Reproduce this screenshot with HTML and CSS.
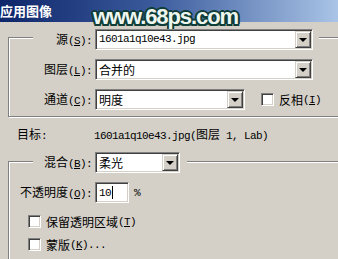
FILE: index.html
```html
<!DOCTYPE html>
<html lang="zh-CN">
<head>
  <meta charset="UTF-8" />
  <title>应用图像</title>
  <link rel="stylesheet" href="styles.css">
</head>
<body>

  <!-- Title bar -->
  <div class="titlebar">
    <span class="title">应用图像</span>
    <span class="watermark">www.68ps.com</span>
  </div>

  <!-- Source group -->
  <fieldset class="group group-source">
    <legend class="row">
      <span class="lbl lbl-legend">源<span class="lt">(<u>S</u>):</span></span>
      <div class="select select-wide"><span class="val lt">1601a1q10e43.jpg</span><span class="btn"></span></div>
    </legend>

    <div class="row">
      <span class="lbl">图层<span class="lt">(<u>L</u>):</span></span>
      <div class="select select-wide"><span class="val">合并的</span><span class="btn"></span></div>
    </div>

    <div class="row">
      <span class="lbl">通道<span class="lt">(<u>C</u>):</span></span>
      <div class="select select-mid"><span class="val">明度</span><span class="btn"></span></div>
      <span class="check check-invert"><span class="box"></span>反相<span class="lt">(<u>I</u>)</span></span>
    </div>
  </fieldset>

  <!-- Target -->
  <div class="target">
    <span class="target-lbl">目标<span class="lt">:</span></span>
    <span class="target-val"><span class="lt">1601a1q10e43.jpg(</span>图层<span class="lt"> 1, Lab)</span></span>
  </div>

  <!-- Blending group -->
  <fieldset class="group group-blend">
    <legend class="row">
      <span class="lbl lbl-legend">混合<span class="lt">(<u>B</u>):</span></span>
      <div class="select select-small"><span class="val">柔光</span><span class="btn"></span></div>
    </legend>

    <div class="row row-opacity">
      <span class="lbl">不透明度<span class="lt">(<u>O</u>):</span></span>
      <div class="input"><span class="lt">10</span><span class="caret"></span></div>
      <span class="lt pct">%</span>
    </div>

    <div class="check check-row"><span class="box"></span>保留透明区域<span class="lt">(<u>T</u>)</span></div>
    <div class="check check-row"><span class="box"></span>蒙版<span class="lt">(<u>K</u>)...</span></div>
  </fieldset>

</body>
</html>
```

FILE: styles.css
```css
html {
  overflow: hidden;
}
body {
  margin: 0;
  background: #d4d0c8;
  font-family: "Noto Sans CJK SC", sans-serif;
  font-size: 12px;
  color: #000;
  overflow: hidden;
  width: 338px;
  height: 259px;
}
.lt {
  font-family: "Liberation Mono", monospace;
  font-size: 11px;
  letter-spacing: -0.6px;
}
u {
  text-decoration: underline;
}

/* title bar */
.titlebar {
  position: relative;
  height: 22px;
  background: linear-gradient(to right, #0e266a, #3a5a9c 45%, #a9c4e6);
}
.title {
  display: block;
  color: #fff;
  font-weight: bold;
  font-size: 13px;
  line-height: 22px;
}
.watermark {
  position: absolute;
  left: 93px;
  top: 4px;
  font-family: "Liberation Sans", Arial, sans-serif;
  font-weight: bold;
  font-size: 22px;
  letter-spacing: -1.1px;
  line-height: 25px;
  color: #eef6ef;
  text-shadow:
    2px 0 0 #0f3d38, -2px 0 0 #0f3d38, 0 2px 0 #0f3d38, 0 -2px 0 #0f3d38,
    1.5px 1.5px 0 #0f3d38, -1.5px 1.5px 0 #0f3d38, 1.5px -1.5px 0 #0f3d38, -1.5px -1.5px 0 #0f3d38;
}

/* group boxes */
.group {
  margin: 2px -20px 0 8px;
  padding: 0 0 6px 0;
  border: 1px solid #808080;
  box-shadow: inset 1px 1px 0 #fff, 1px 1px 0 #fff;
  min-width: 0;
}
.group legend {
  margin-left: 24px;
  padding: 5px 6px 0 0;
  background: #d4d0c8;
}
.group-blend {
  margin-top: 9px;
  padding-bottom: 40px;
}
.group-blend legend {
  padding: 3px 7px 0 0;
}

.row {
  display: flex;
  align-items: center;
  height: 21px;
  margin-top: 9px;
}
.group legend.row {
  margin-top: 0;
}
.lbl {
  width: 83px;
  margin-right: 3px;
  text-align: right;
  white-space: nowrap;
  line-height: 21px;
}
.lbl-legend {
  width: 59px;
}

/* sunken select */
.select, .input {
  position: relative;
  box-sizing: border-box;
  height: 21px;
  background: #fff;
  border: 1px solid;
  border-color: #808080 #fff #fff #808080;
  box-shadow: inset 1px 1px 0 #404040, inset -1px -1px 0 #d4d0c8;
  display: flex;
  align-items: center;
}
.select-wide { width: 218px; }
.select-mid { width: 150px; }
.select-small { width: 85px; }
.val {
  flex: 1;
  padding-left: 3px;
  line-height: 17px;
  white-space: nowrap;
  overflow: hidden;
}
.btn {
  position: relative;
  box-sizing: border-box;
  width: 16px;
  height: 17px;
  margin-right: 1px;
  background: #d4d0c8;
  border: 1px solid;
  border-color: #d4d0c8 #404040 #404040 #d4d0c8;
  box-shadow: inset 1px 1px 0 #fff, inset -1px -1px 0 #808080;
}
.btn::after {
  content: "";
  position: absolute;
  left: 3px;
  top: 6px;
  border-left: 4px solid transparent;
  border-right: 4px solid transparent;
  border-top: 4px solid #000;
}

/* checkboxes */
.check {
  display: flex;
  align-items: center;
  white-space: nowrap;
}
.box {
  box-sizing: border-box;
  width: 13px;
  height: 13px;
  margin-right: 5px;
  background: #fff;
  border: 1px solid;
  border-color: #808080 #fff #fff #808080;
  box-shadow: inset 1px 1px 0 #404040, inset -1px -1px 0 #d4d0c8;
}
.check-invert {
  margin-left: 16px;
}
.check-row {
  height: 13px;
  margin: 10px 0 0 19px;
}
.row-opacity + .check-row {
  margin-top: 12px;
}

/* target line */
.target {
  display: flex;
  align-items: center;
  height: 13px;
  margin: 10px 0 0 17px;
  white-space: nowrap;
}
.target-lbl {
  width: 77px;
}

/* opacity input */
.input {
  width: 34px;
  padding-left: 3px;
}
.caret {
  width: 1px;
  height: 13px;
  margin-left: 1px;
  background: #000;
}
.pct {
  margin-left: 5px;
}
```
